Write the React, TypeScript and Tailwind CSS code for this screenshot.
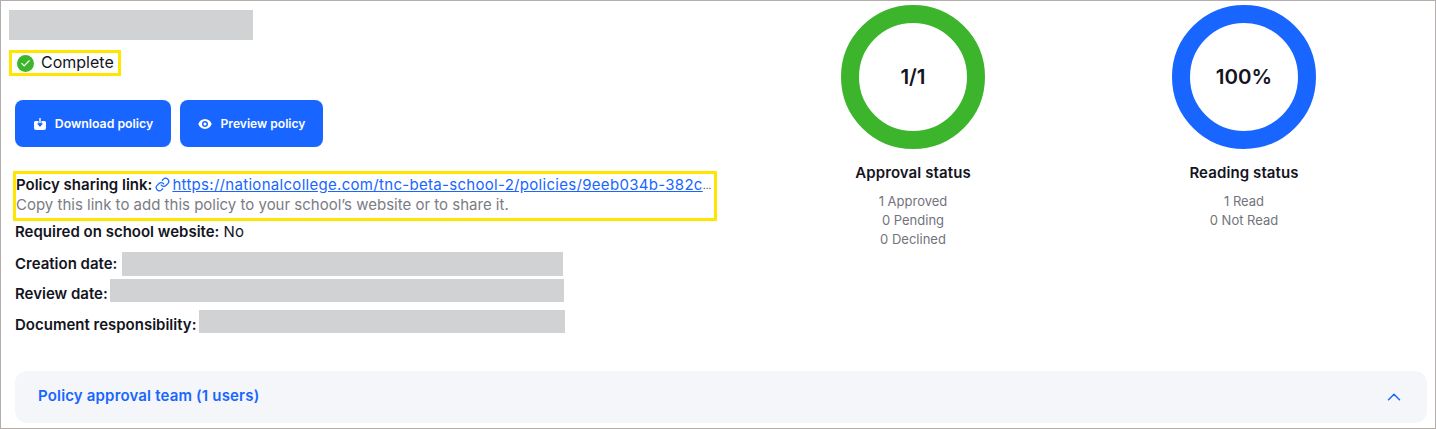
import React from 'react';
import { ChevronUp, Check, Link } from 'lucide-react';

const font = "font-['Inter','Noto_Sans',sans-serif]";

const Ring = ({ value, color }: { value: string; color: string }) => (
  <div className={`w-[144px] h-[144px] rounded-full border-[18px] flex items-center justify-center ${color}`}>
    <span className="text-[20.500px] font-semibold text-[#14141e]">{value}</span>
  </div>
);

const Chart = ({ value, color, title, lines, className }: { value: string; color: string; title: string; lines: string[]; className: string }) => (
  <div className={`flex flex-col items-center w-[200px] ${className}`}>
    <Ring value={value} color={color} />
    <div className="mt-[14px] text-[15px] leading-[20px] font-semibold tracking-[0.1px] text-[#14141e]">{title}</div>
    <div className="mt-[9px] text-[13px] leading-[19px] text-[#73737d] text-center">
      {lines.map((l) => (
        <div key={l}>{l}</div>
      ))}
    </div>
  </div>
);

const Row = ({ label, width, className, labelClass, barClass }: { label: string; width: string; className: string; labelClass?: string; barClass: string }) => (
  <div className={`flex items-center ml-[6px] text-[15px] font-semibold text-[#14141e] ${className}`}>
    <span className={`whitespace-nowrap ${labelClass ?? ''}`}>{label}</span>
    <div className={`bg-[#d1d2d4] h-full ${barClass} ${width}`} />
  </div>
);

const DownloadIcon = () => (
  <svg width="14" height="14" viewBox="0 0 14 14" className="shrink-0">
    <path d="M2.5 4h3v2.5H4L7 10l3-3.5H8.500V4h3A1.500 1.500 0 0 1 13 5.500V11a2 2 0 0 1-2 2H3a2 2 0 0 1-2-2V5.500A1.500 1.500 0 0 1 2.500 4Z" fill="white" />
    <path d="M6.300 1h1.400v5h-1.400Z" fill="white" />
  </svg>
);

const EyeIcon = () => (
  <svg width="14" height="14" viewBox="0 0 14 14" className="shrink-0">
    <path d="M7 2C3.800 2 1.300 4.200 0.300 7c1 2.800 3.500 5 6.700 5s5.700-2.200 6.700-5C12.700 4.200 10.200 2 7 2Z" fill="white" />
    <circle cx="7" cy="7" r="3" fill="#1866ff" />
    <circle cx="7" cy="7" r="1.500" fill="white" />
  </svg>
);

export default function App() {
  return (
    <div className={`w-[1436px] h-[429px] bg-white border border-[#b3aeab] overflow-hidden flex flex-col ${font}`}>
      <div className="flex h-[370px]">
        <div className="w-[720px] shrink-0 pl-[8px] pt-[9px]">
          <div className="w-[244px] h-[30px] bg-[#d1d2d4]" />

          <div className="mt-[10px] w-[112px] h-[26px] border-[3px] border-[#ffe600] flex items-center pl-[5px] gap-[7px]">
            <span className="w-[17px] h-[17px] rounded-full bg-[#3cb52d] flex items-center justify-center">
              <Check className="w-[11px] h-[11px] text-white" strokeWidth={2.500} />
            </span>
            <span className="text-[16px] leading-[18px] -mt-[3px] text-[#14141e]">Complete</span>
          </div>

          <div className="mt-[24px] ml-[6px] flex gap-[9px]">
            <button className="w-[156px] h-[47px] pt-[1px] rounded-[8px] bg-[#1866ff] text-white text-[12.300px] font-semibold flex items-center justify-center gap-[8px]">
              <DownloadIcon />
              Download policy
            </button>
            <button className="w-[143px] h-[47px] pt-[1px] rounded-[8px] bg-[#1866ff] text-white text-[12.100px] font-semibold flex items-center justify-center gap-[9px]">
              <EyeIcon />
              Preview policy
            </button>
          </div>

          <div className="mt-[24px] ml-[4px] w-[704px] h-[50px] border-[3px] border-[#ffe600] pt-[1px] text-[15px] leading-[20px]">
            <div className="flex items-center whitespace-nowrap">
              <span className="font-semibold text-[#14141e]">Policy sharing link:</span>
              <a className="ml-[3px] text-[#1866ff] underline tracking-[0.3px]" href="#">
                <Link className="inline w-[15px] h-[15px] -mt-[2px] mr-[2px]" />
                https://nationalcollege.com/tnc-beta-school-2/policies/9eeb034b-382c
              </a>
              <span className="text-[#14141e] text-[10px]">…</span>
            </div>
            <div className="text-[#7b7b84]">Copy this link to add this policy to your school’s website or to share it.</div>
          </div>

          <div className="mt-[1px] ml-[6px] h-[20px] text-[15px] leading-[20px] text-[#14141e]">
            <span className="font-semibold">Required on school website:</span> No
          </div>

          <div>
            <Row label="Creation date:" width="w-[441px]" barClass="ml-[5px]" className="mt-[10px] h-[24px]" />
            <Row label="Review date:" width="w-[454px]" barClass="ml-[2px]" className="mt-[3px] h-[23px]" labelClass="pt-[8px]" />
            <Row label="Document responsibility:" width="w-[366px]" barClass="ml-[3px]" className="mt-[8px] h-[23px]" labelClass="pt-[8px]" />
          </div>
        </div>

        <div className="flex pt-[4px]">
          <Chart
            value="1/1"
            color="border-[#3cb52d]"
            title="Approval status"
            lines={['1 Approved', '0 Pending', '0 Declined']}
            className="ml-[92px]"
          />
          <Chart value="100%" color="border-[#1866ff]" title="Reading status" lines={['1 Read', '0 Not Read']} className="ml-[131px]" />
        </div>
      </div>

      <div className="ml-[14px] w-[1412px] h-[52px] rounded-[12px] bg-[#f5f6fa] flex items-center justify-between pl-[23px] pr-[22px]">
        <span className="text-[15px] font-semibold tracking-[0.17px] text-[#1866ff] -mt-[1px]">Policy approval team (1 users)</span>
        <ChevronUp className="w-[22px] h-[22px] text-[#1866ff]" strokeWidth={1.600} />
      </div>
    </div>
  );
}
